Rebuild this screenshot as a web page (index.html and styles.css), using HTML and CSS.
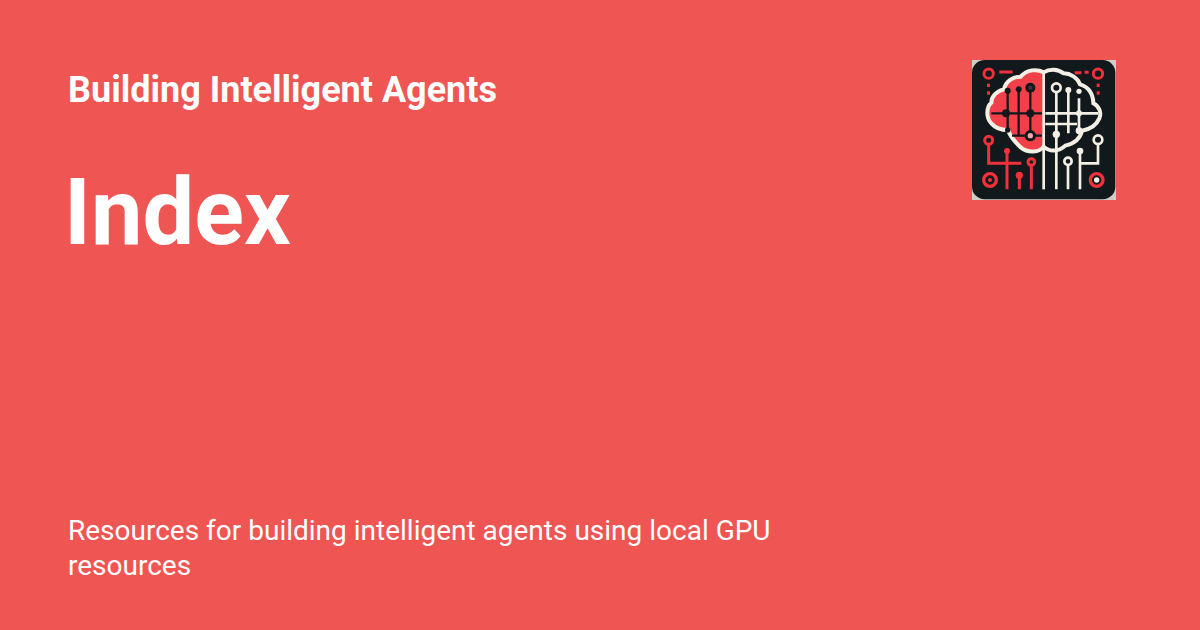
FILE: index.html
```html
<!DOCTYPE html>
<html lang="en">
  <head>
    <meta charset="UTF-8" />
    <meta name="viewport" content="width=device-width, initial-scale=1.0" />
    <title>Index - Building Intelligent Agents</title>
    <link rel="stylesheet" href="styles.css">
  </head>
  <body>
    <main class="card">
      <div class="card-top">
        <div class="card-heading">
          <p class="site-name">Building Intelligent Agents</p>
          <h1 class="page-title">Index</h1>
        </div>
        <div class="logo">
          <svg class="logo-img" viewBox="30 30 432 420" aria-hidden="true">
            <rect x="30" y="30" width="432" height="420" fill="#cfcdc6" />
            <rect x="30" y="30" width="430" height="418" rx="38" fill="#11191c" />

            <!-- brain, left half filled -->
            <path class="brain-fill" d="M245 67C225 56 195 58 176 80C153 80 131 93 126 118C103 123 88 140 88 158C72 172 72 204 88 220C100 234 120 240 138 240C146 264 160 276 176 292C198 310 232 308 245 290Z" />
            <path class="line-cream brain-edge" d="M245 67C225 56 195 58 176 80C153 80 131 93 126 118C103 123 88 140 88 158C72 172 72 204 88 220C100 234 120 240 138 240C146 264 160 276 176 292C198 310 232 308 245 290C262 306 290 306 310 287C332 282 354 270 360 242C382 238 402 228 412 205C420 186 410 168 394 160C394 133 380 110 354 103C347 83 325 70 305 70C288 56 262 56 245 67Z" />
            <path class="line-cream thin" d="M245 67V418" />

            <!-- left side traces -->
            <path class="line-dark" d="M137 122V240M170 118V258M205 118V257M88 190H240M150 257H240" />
            <circle class="dot-dark" cx="137" cy="122" r="9" />
            <circle class="dot-dark" cx="170" cy="118" r="9" />
            <circle class="dot-dark" cx="132" cy="190" r="12" />
            <circle class="dot-dark" cx="205" cy="190" r="12" />
            <circle class="dot-dark" cx="137" cy="240" r="8" />
            <circle cx="205" cy="113" r="15" fill="#11191c" />
            <circle cx="205" cy="113" r="6" fill="#3b3a38" />
            <circle cx="205" cy="257" r="17" fill="#11191c" />
            <circle cx="205" cy="257" r="8" fill="#f2a7a8" />

            <!-- right side traces -->
            <path class="line-cream thin" d="M283 126V418M319 122V250M351 145V250M250 190H408M250 222H345" />
            <circle class="ring-cream" cx="283" cy="113" r="13" />
            <circle class="dot-cream" cx="319" cy="120" r="9" />
            <circle class="dot-cream" cx="351" cy="124" r="8" />
            <circle class="dot-cream" cx="351" cy="190" r="9" />
            <circle class="dot-cream" cx="283" cy="253" r="11" />
            <circle class="dot-cream" cx="351" cy="242" r="10" />

            <!-- bottom right circuit -->
            <path class="line-cream thin" d="M318 345V418M354 305V418M354 340H408V280" />
            <circle class="ring-cream" cx="318" cy="334" r="11" />
            <circle class="dot-cream" cx="354" cy="303" r="10" />
            <circle class="ring-cream" cx="408" cy="269" r="13" />
            <circle class="ring-red-big" cx="404" cy="390" r="19" />
            <circle class="dot-cream" cx="404" cy="390" r="8" />

            <!-- bottom left circuit -->
            <path class="line-red" d="M80 282V340H178M135 303V418M172 378V418M208 345V418" />
            <circle class="ring-red" cx="80" cy="271" r="12" />
            <circle class="dot-red" cx="135" cy="303" r="9" />
            <circle class="dot-red" cx="172" cy="376" r="11" />
            <circle class="ring-red" cx="208" cy="336" r="10" />
            <circle class="ring-red-big" cx="84" cy="390" r="19" />
            <circle class="dot-red" cx="84" cy="390" r="6" />

            <!-- top corners -->
            <circle class="ring-red" cx="80" cy="71" r="14" />
            <path class="line-red" d="M112 66H152M338 68H358M368 67H380" />
            <rect class="dot-red" x="75" y="101" width="9" height="10" />
            <rect class="dot-red" x="75" y="124" width="9" height="10" />
            <circle class="ring-red" cx="408" cy="71" r="14" />
            <rect class="dot-red" x="404" y="101" width="9" height="10" />
            <rect class="dot-red" x="404" y="124" width="9" height="10" />
          </svg>
        </div>
      </div>
      <p class="card-desc">Resources for building intelligent agents using local GPU resources</p>
    </main>
  </body>
</html>
```

FILE: styles.css
```css
* {
  margin: 0;
  padding: 0;
  box-sizing: border-box;
}

body {
  background-color: #ef5552;
  color: #fff;
  font-family: Roboto, "Liberation Sans", sans-serif;
}

.card {
  height: 630px;
  padding: 60px 84px 47px 68px;
  display: flex;
  flex-direction: column;
  justify-content: space-between;
}

.card-top {
  display: flex;
  justify-content: space-between;
  align-items: flex-start;
}

.site-name {
  font-size: 36px;
  font-weight: 700;
  line-height: 60px;
}

.page-title {
  margin-top: 38px;
  margin-left: -4px;
  font-size: 92px;
  font-weight: 700;
  line-height: 110px;
}

.logo {
  width: 144px;
  height: 140px;
}

.logo-img {
  display: block;
  width: 100%;
  height: 100%;
}

.card-desc {
  width: 740px;
  font-size: 28px;
  line-height: 35px;
}

.brain-fill {
  fill: #f23f49;
}

.brain-edge,
.line-cream,
.line-dark,
.line-red {
  fill: none;
}

.line-cream {
  stroke: #f4efe4;
  stroke-width: 9;
}

.brain-edge {
  stroke-width: 12;
}

.line-cream.thin {
  stroke-width: 8;
}

.line-dark {
  stroke: #11191c;
  stroke-width: 7;
}

.line-red {
  stroke: #f0313c;
  stroke-width: 9;
}

.dot-dark {
  fill: #11191c;
}

.dot-cream {
  fill: #f4efe4;
}

.dot-red {
  fill: #f0313c;
}

.ring-cream {
  fill: #11191c;
  stroke: #f4efe4;
  stroke-width: 8;
}

.ring-red,
.ring-red-big {
  fill: #11191c;
  stroke: #f0313c;
  stroke-width: 9;
}

.ring-red-big {
  stroke-width: 10;
}
```
